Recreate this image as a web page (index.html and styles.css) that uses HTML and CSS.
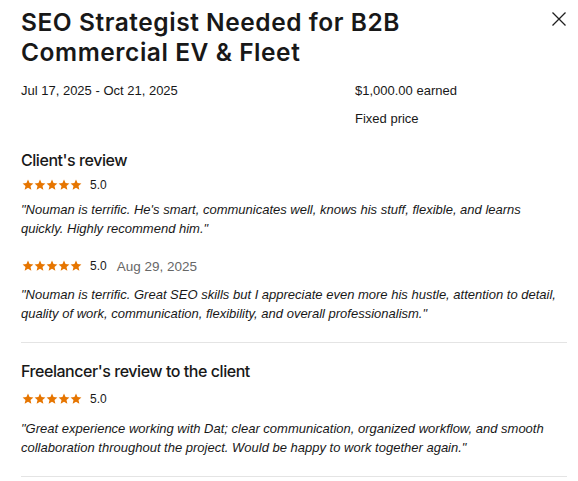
FILE: index.html
```html
<!DOCTYPE html>
<html>
<head>
<meta charset="utf-8">
<link rel="stylesheet" href="styles.css">
</head>
<body>
<div class="modal">
  <div class="header">
    <h1 class="title">SEO Strategist Needed for B2B Commercial EV &amp; Fleet</h1>
    <button class="close" aria-label="Close">
      <svg width="16" height="16" viewBox="0 0 16 16"><path d="M1.5 1.5 L14.5 14.5 M14.5 1.5 L1.5 14.5" stroke="#1f1f1f" stroke-width="1.3" fill="none"/></svg>
    </button>
  </div>
  <div class="meta">
    <div class="meta-left">Jul 17, 2025 - Oct 21, 2025</div>
    <div class="meta-right">
      <div>$1,000.00 earned</div>
      <div class="meta-sub">Fixed price</div>
    </div>
  </div>

  <section class="section">
    <h2 class="section-title">Client's review</h2>
    <div class="rating">
      <span class="stars">
        <svg viewBox="0 0 12 12"><path d="M6 0.6 L7.55 4.1 L11.4 4.45 L8.5 7 L9.35 10.8 L6 8.8 L2.65 10.8 L3.5 7 L0.6 4.45 L4.45 4.1 Z"/></svg>
        <svg viewBox="0 0 12 12"><path d="M6 0.6 L7.55 4.1 L11.4 4.45 L8.5 7 L9.35 10.8 L6 8.8 L2.65 10.8 L3.5 7 L0.6 4.45 L4.45 4.1 Z"/></svg>
        <svg viewBox="0 0 12 12"><path d="M6 0.6 L7.55 4.1 L11.4 4.45 L8.5 7 L9.35 10.8 L6 8.8 L2.65 10.8 L3.5 7 L0.6 4.45 L4.45 4.1 Z"/></svg>
        <svg viewBox="0 0 12 12"><path d="M6 0.6 L7.55 4.1 L11.4 4.45 L8.5 7 L9.35 10.8 L6 8.8 L2.65 10.8 L3.5 7 L0.6 4.45 L4.45 4.1 Z"/></svg>
        <svg viewBox="0 0 12 12"><path d="M6 0.6 L7.55 4.1 L11.4 4.45 L8.5 7 L9.35 10.8 L6 8.8 L2.65 10.8 L3.5 7 L0.6 4.45 L4.45 4.1 Z"/></svg>
      </span>
      <span class="score">5.0</span>
    </div>
    <p class="quote">"Nouman is terrific. He's smart, communicates well, knows his stuff, flexible, and learns quickly. Highly recommend him."</p>

    <div class="rating rating-gap">
      <span class="stars">
        <svg viewBox="0 0 12 12"><path d="M6 0.6 L7.55 4.1 L11.4 4.45 L8.5 7 L9.35 10.8 L6 8.8 L2.65 10.8 L3.5 7 L0.6 4.45 L4.45 4.1 Z"/></svg>
        <svg viewBox="0 0 12 12"><path d="M6 0.6 L7.55 4.1 L11.4 4.45 L8.5 7 L9.35 10.8 L6 8.8 L2.65 10.8 L3.5 7 L0.6 4.45 L4.45 4.1 Z"/></svg>
        <svg viewBox="0 0 12 12"><path d="M6 0.6 L7.55 4.1 L11.4 4.45 L8.5 7 L9.35 10.8 L6 8.8 L2.65 10.8 L3.5 7 L0.6 4.45 L4.45 4.1 Z"/></svg>
        <svg viewBox="0 0 12 12"><path d="M6 0.6 L7.55 4.1 L11.4 4.45 L8.5 7 L9.35 10.8 L6 8.8 L2.65 10.8 L3.5 7 L0.6 4.45 L4.45 4.1 Z"/></svg>
        <svg viewBox="0 0 12 12"><path d="M6 0.6 L7.55 4.1 L11.4 4.45 L8.5 7 L9.35 10.8 L6 8.8 L2.65 10.8 L3.5 7 L0.6 4.45 L4.45 4.1 Z"/></svg>
      </span>
      <span class="score">5.0</span>
      <span class="date">Aug 29, 2025</span>
    </div>
    <p class="quote quote-dated">"Nouman is terrific. Great SEO skills but I appreciate even more his hustle, attention to detail, quality of work, communication, flexibility, and overall professionalism."</p>
  </section>

  <section class="section bordered">
    <h2 class="section-title">Freelancer's review to the client</h2>
    <div class="rating rating-lower">
      <span class="stars">
        <svg viewBox="0 0 12 12"><path d="M6 0.6 L7.55 4.1 L11.4 4.45 L8.5 7 L9.35 10.8 L6 8.8 L2.65 10.8 L3.5 7 L0.6 4.45 L4.45 4.1 Z"/></svg>
        <svg viewBox="0 0 12 12"><path d="M6 0.6 L7.55 4.1 L11.4 4.45 L8.5 7 L9.35 10.8 L6 8.8 L2.65 10.8 L3.5 7 L0.6 4.45 L4.45 4.1 Z"/></svg>
        <svg viewBox="0 0 12 12"><path d="M6 0.6 L7.55 4.1 L11.4 4.45 L8.5 7 L9.35 10.8 L6 8.8 L2.65 10.8 L3.5 7 L0.6 4.45 L4.45 4.1 Z"/></svg>
        <svg viewBox="0 0 12 12"><path d="M6 0.6 L7.55 4.1 L11.4 4.45 L8.5 7 L9.35 10.8 L6 8.8 L2.65 10.8 L3.5 7 L0.6 4.45 L4.45 4.1 Z"/></svg>
        <svg viewBox="0 0 12 12"><path d="M6 0.6 L7.55 4.1 L11.4 4.45 L8.5 7 L9.35 10.8 L6 8.8 L2.65 10.8 L3.5 7 L0.6 4.45 L4.45 4.1 Z"/></svg>
      </span>
      <span class="score">5.0</span>
    </div>
    <p class="quote quote-free">"Great experience working with Dat; clear communication, organized workflow, and smooth collaboration throughout the project. Would be happy to work together again."</p>
  </section>
  <div class="bottom-rule"></div>
</div>
</body>
</html>
```

FILE: styles.css
```css
* { box-sizing: border-box; }
html, body {
  margin: 0;
  padding: 0;
  background: #ffffff;
}
body {
  font-family: "Liberation Sans", Arial, sans-serif;
  color: #181818;
}
.modal {
  padding: 7px 11px 0 21px;
}
.header {
  display: flex;
  justify-content: space-between;
  align-items: flex-start;
}
.title {
  margin: 0;
  font-family: Inter, "Liberation Sans", sans-serif;
  font-size: 24.5px;
  line-height: 30px;
  font-weight: 600;
  letter-spacing: 0.55px;
  max-width: 430px;
}
.close {
  border: 0;
  background: none;
  padding: 0;
  margin: 4px 0 0 0;
  width: 16px;
  height: 16px;
  cursor: pointer;
}
.close svg { display: block; }
.meta {
  display: grid;
  grid-template-columns: 334px 1fr;
  margin-top: 14px;
  font-size: 13px;
  line-height: 20px;
}
.meta-sub { margin-top: 8px; }
.section {
  margin-top: 19px;
}
.section-title {
  margin: 0;
  font-family: Inter, "Liberation Sans", sans-serif;
  font-size: 16px;
  line-height: 24px;
  font-weight: 500;
  letter-spacing: -0.45px;
}
.rating {
  display: flex;
  align-items: center;
  margin-top: 4px;
  height: 18px;
}
.rating-gap { margin-top: 19px; }
.rating-lower { margin-top: 7px; }
.stars {
  display: flex;
  gap: 0;
  margin-left: 1px;
}
.stars svg {
  width: 12px;
  height: 12px;
  fill: #e67500;
  display: block;
}
.score {
  margin-left: 8px;
  font-size: 12px;
}
.date {
  margin-left: 10px;
  font-size: 13.5px;
  color: #676767;
}
.quote {
  margin: 6px 0 0 0;
  font-style: italic;
  font-size: 13px;
  line-height: 19px;
  max-width: 540px;
}
.quote-dated { margin-top: 10px; }
.quote-free { margin-top: 11px; }
.bordered {
  border-top: 1px solid #e4e4e4;
  margin-top: 19px;
  padding-top: 16px;
}
.bottom-rule {
  border-top: 1px solid #e4e4e4;
  margin-top: 19px;
}
```
